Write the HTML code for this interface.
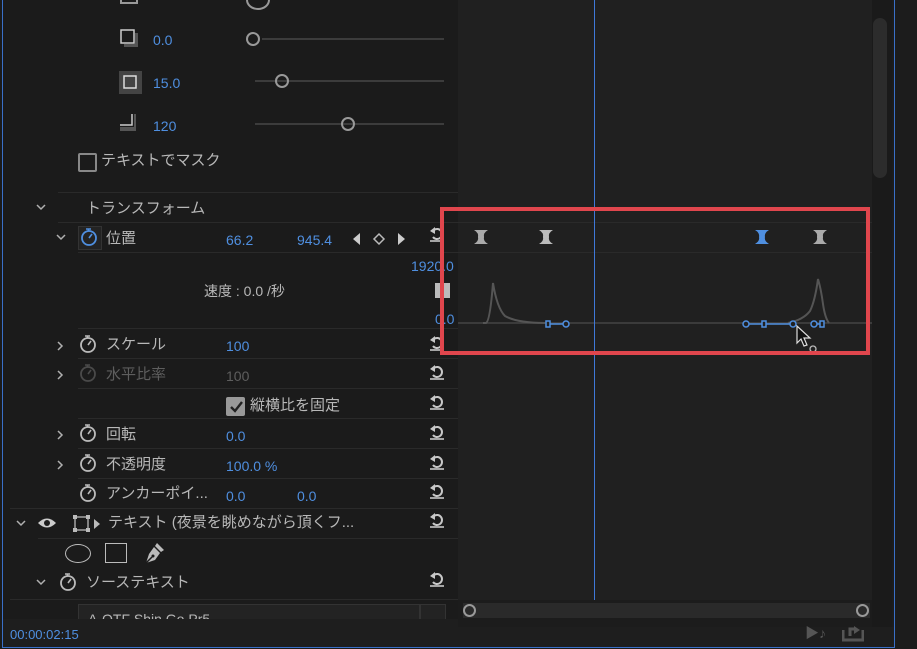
<!DOCTYPE html>
<html><head><meta charset="utf-8"><style>
body{margin:0;width:917px;height:649px;overflow:hidden;background:#1c1c1c;font-family:"Liberation Sans","Noto Sans CJK JP",sans-serif;font-size:14px;color:#b8b8b8;position:relative}
.a{position:absolute}
.b{color:#4f8fe0}
.g{color:#5e5e5e}
.line{position:absolute;height:1px;background:#2a2a2a}
.t{position:absolute;white-space:nowrap;line-height:16px}
</style></head><body>
<svg width="0" height="0" style="position:absolute"><defs>
<g id="sw"><circle cx="9" cy="11" r="7" fill="none" stroke="currentColor" stroke-width="1.8"/><path d="M6 2h5M8.5 2v2M9 11l3-4" stroke="currentColor" stroke-width="1.6" fill="none"/></g>
<g id="rs"><path d="M6 4a5 5 0 1 1 -1 7" fill="none" stroke="#c8c8c8" stroke-width="2"/><path d="M2 5l5-4v7z" fill="#c8c8c8"/><path d="M2 15h14" stroke="#c8c8c8" stroke-width="1.6"/></g>
<g id="ar"><path d="M2 2l4 4-4 4" fill="none" stroke="#b0b0b0" stroke-width="1.5"/></g>
<g id="dn"><path d="M1 2l4 4 4-4" fill="none" stroke="#b0b0b0" stroke-width="1.5"/></g>
<g id="kf"><path d="M0 0h14q-5 3-4 7q-1 4 4 7h-14q5-3 4-7q1-4-4-7z" fill="currentColor"/></g>
</defs></svg>
<div class="a" style="left:0;top:0;width:458px;height:620px;background:#1b1b1b"></div>
<div class="a" style="left:458px;top:0;width:414px;height:600px;background:#202020"></div>
<div class="a" style="left:872px;top:0;width:20px;height:627px;background:#1a1a1a"></div>
<div class="a" style="left:873px;top:18px;width:14px;height:160px;background:#2c2c2c;border-radius:7px"></div>
<div class="a" style="left:2px;top:0;width:1px;height:647px;background:#3a70c8"></div>
<div class="a" style="left:894px;top:0;width:1px;height:648px;background:#3a70c8"></div>
<div class="a" style="left:2px;top:647px;width:893px;height:1px;background:#3a70c8"></div>
<!-- font dropdown (clipped) -->
<div class="a" style="left:78px;top:604px;width:340px;height:23px;background:#232323;border:1px solid #333;overflow:hidden"><div class="t" style="left:9px;top:6px;font-size:14px">A-OTF Shin Go Pr5</div></div>
<div class="a" style="left:420px;top:604px;width:24px;height:23px;background:#232323;border:1px solid #333"></div>
<div class="a" style="left:3px;top:619px;width:455px;height:28px;background:#1e1e1e"></div>
<div class="a" style="left:458px;top:627px;width:436px;height:20px;background:#1e1e1e"></div>
<div class="t b" style="left:10px;top:627px;font-size:13px">00:00:02:15</div>
<div class="t" style="left:805px;top:625px;color:#555;font-size:14px">▶♪</div>
<svg class="a" style="left:842px;top:626px" width="22" height="16"><path d="M1 4v10h20V4M8 10V3h6" fill="none" stroke="#555" stroke-width="3"/><path d="M12 0l6 4-6 4z" fill="#555"/></svg>
<!-- scroll bar -->
<div class="a" style="left:463px;top:603px;width:407px;height:15px;background:#2a2a2a"></div>
<div class="a" style="left:463px;top:604px;width:9px;height:9px;border:2px solid #999;border-radius:50%"></div>
<div class="a" style="left:856px;top:604px;width:9px;height:9px;border:2px solid #999;border-radius:50%"></div>
<!-- top sliders -->
<div class="a" style="left:246px;top:-10px;width:20px;height:16px;border:2px solid #999;border-radius:50%"></div>
<div class="a" style="left:120px;top:-6px;width:14px;height:8px;border:2px solid #999;border-top:none"></div>
<svg class="a" style="left:120px;top:29px" width="22" height="22"><rect x="1" y="1" width="13" height="13" fill="none" stroke="#ccc" stroke-width="1.5"/><path d="M15 4v11H4v3h14V4z" fill="#555"/></svg>
<div class="t b" style="left:153px;top:32px">0.0</div>
<div class="a" style="left:262px;top:38px;width:182px;height:2px;background:#3c3c3c"></div>
<div class="a" style="left:246px;top:32px;width:10px;height:10px;border:2px solid #999;border-radius:50%"></div>
<svg class="a" style="left:119px;top:71px" width="24" height="24"><rect x="0" y="0" width="23" height="23" fill="#444"/><rect x="5" y="5" width="12" height="12" fill="none" stroke="#ddd" stroke-width="1.5"/></svg>
<div class="t b" style="left:153px;top:75px">15.0</div>
<div class="a" style="left:255px;top:80px;width:189px;height:2px;background:#3c3c3c"></div>
<div class="a" style="left:275px;top:74px;width:10px;height:10px;border:2px solid #999;border-radius:50%"></div>
<svg class="a" style="left:119px;top:113px" width="22" height="22"><path d="M13 1v11H1" fill="none" stroke="#ccc" stroke-width="1.5"/><path d="M15 1v13H1v4h16V1z" fill="#555"/></svg>
<div class="t b" style="left:153px;top:118px">120</div>
<div class="a" style="left:255px;top:123px;width:189px;height:2px;background:#3c3c3c"></div>
<div class="a" style="left:341px;top:117px;width:10px;height:10px;border:2px solid #999;border-radius:50%"></div>
<div class="a" style="left:78px;top:153px;width:15px;height:15px;border:2px solid #888;border-radius:2px"></div>
<div class="t" style="left:101px;top:153px;font-size:15px">テキストでマスク</div>
<div class="line" style="left:58px;top:192px;width:400px"></div>
<svg class="a" style="left:36px;top:203px" width="12" height="10"><use href="#dn"/></svg>
<div class="t" style="left:86px;top:201px;font-size:15px">トランスフォーム</div>
<div class="line" style="left:58px;top:222px;width:400px"></div>
<svg class="a" style="left:56px;top:233px" width="12" height="10"><use href="#dn"/></svg>
<div class="a" style="left:78px;top:226px;width:22px;height:22px;background:#232323;border:1px solid #333"></div>
<svg class="a" style="left:80px;top:227px;color:#4f8fe0" width="19" height="20"><use href="#sw"/></svg>
<div class="t" style="left:106px;top:231px;font-size:15px">位置</div>
<div class="t b" style="left:226px;top:232px">66.2</div>
<div class="t b" style="left:297px;top:232px">945.4</div>
<svg class="a" style="left:352px;top:231px" width="60" height="16"><path d="M8 2v12L1 8z" fill="#ccc"/><path d="M27 3l5 5-5 5-5-5z" fill="none" stroke="#bbb" stroke-width="1.5"/><path d="M46 2v12l7-6z" fill="#ccc"/></svg>
<div class="line" style="left:78px;top:252px;width:380px"></div>
<div class="t b" style="left:411px;top:258px">1920.0</div>
<div class="t" style="left:204px;top:283px">速度 : 0.0 /秒</div>
<div class="a" style="left:435px;top:283px;width:15px;height:15px;background:#bbb"></div>
<div class="t b" style="left:435px;top:311px">0.0</div>
<div class="line" style="left:78px;top:328px;width:380px"></div>
<!-- rows -->
<svg class="a" style="left:56px;top:340px" width="10" height="12"><use href="#ar"/></svg>
<svg class="a" style="left:79px;top:334px;color:#bbb" width="19" height="20"><use href="#sw"/></svg>
<div class="t" style="left:106px;top:337px;font-size:15px">スケール</div>
<div class="t b" style="left:226px;top:338px">100</div>
<div class="line" style="left:78px;top:358px;width:380px"></div>
<svg class="a" style="left:56px;top:369px" width="10" height="12"><use href="#ar"/></svg>
<svg class="a" style="left:79px;top:363px;color:#4a4a4a" width="19" height="20"><use href="#sw"/></svg>
<div class="t g" style="left:106px;top:367px;font-size:15px">水平比率</div>
<div class="t g" style="left:226px;top:368px">100</div>
<div class="line" style="left:78px;top:388px;width:380px"></div>
<div class="a" style="left:226px;top:397px;width:19px;height:19px;background:#999;border-radius:2px"></div>
<svg class="a" style="left:229px;top:400px" width="14" height="13"><path d="M2 7l4 4 7-9" fill="none" stroke="#222" stroke-width="2.4"/></svg>
<div class="t" style="left:250px;top:398px;font-size:15px">縦横比を固定</div>
<div class="line" style="left:78px;top:418px;width:380px"></div>
<svg class="a" style="left:56px;top:429px" width="10" height="12"><use href="#ar"/></svg>
<svg class="a" style="left:79px;top:423px;color:#bbb" width="19" height="20"><use href="#sw"/></svg>
<div class="t" style="left:106px;top:427px;font-size:15px">回転</div>
<div class="t b" style="left:226px;top:428px">0.0</div>
<div class="line" style="left:78px;top:448px;width:380px"></div>
<svg class="a" style="left:56px;top:459px" width="10" height="12"><use href="#ar"/></svg>
<svg class="a" style="left:79px;top:453px;color:#bbb" width="19" height="20"><use href="#sw"/></svg>
<div class="t" style="left:106px;top:457px;font-size:15px">不透明度</div>
<div class="t b" style="left:226px;top:458px">100.0 %</div>
<div class="line" style="left:78px;top:478px;width:380px"></div>
<svg class="a" style="left:79px;top:483px;color:#bbb" width="19" height="20"><use href="#sw"/></svg>
<div class="t" style="left:106px;top:486px;font-size:15px">アンカーポイ...</div>
<div class="t b" style="left:226px;top:488px">0.0</div>
<div class="t b" style="left:297px;top:488px">0.0</div>
<div class="line" style="left:10px;top:508px;width:448px"></div>
<svg class="a" style="left:16px;top:519px" width="12" height="10"><use href="#dn"/></svg>
<svg class="a" style="left:37px;top:516px" width="20" height="14"><path d="M1 7q9-9 18 0q-9 9-18 0z" fill="#ccc"/><circle cx="10" cy="7" r="3" fill="#1b1b1b"/></svg>
<svg class="a" style="left:73px;top:515px" width="32" height="18"><rect x="2" y="2" width="13" height="13" fill="none" stroke="#bbb" stroke-width="1.3"/><rect x="0" y="0" width="4" height="4" fill="#bbb"/><rect x="13" y="0" width="4" height="4" fill="#bbb"/><rect x="0" y="13" width="4" height="4" fill="#bbb"/><rect x="13" y="13" width="4" height="4" fill="#bbb"/><path d="M21 4l6 5-6 5z" fill="#bbb"/></svg>
<div class="t" style="left:108px;top:515px;font-size:15px">テキスト (夜景を眺めながら頂くフ...</div>
<div class="line" style="left:38px;top:538px;width:420px"></div>
<div class="a" style="left:65px;top:544px;width:24px;height:17px;border:1.5px solid #bbb;border-radius:50%"></div>
<div class="a" style="left:105px;top:543px;width:20px;height:18px;border:1.5px solid #bbb"></div>
<svg class="a" style="left:143px;top:541px" width="24" height="24"><path d="M14 2l7 7-3 2-6-6zM11 6l6 6-5 7-9 3 3-9z" fill="#bbb"/><path d="M3 22l6-6" stroke="#1b1b1b" stroke-width="1.5"/><circle cx="10" cy="15" r="1.5" fill="#1b1b1b"/></svg>
<svg class="a" style="left:36px;top:578px" width="12" height="10"><use href="#dn"/></svg>
<svg class="a" style="left:59px;top:572px;color:#bbb" width="19" height="20"><use href="#sw"/></svg>
<div class="t" style="left:86px;top:575px;font-size:15px">ソーステキスト</div>
<div class="a" style="left:10px;top:599px;width:448px;height:1px;background:#2a2a2a"></div>
<!-- reset icons -->
<svg class="a" style="left:428px;top:226px" width="18" height="18"><use href="#rs"/></svg>
<svg class="a" style="left:428px;top:335px" width="18" height="18"><use href="#rs"/></svg>
<svg class="a" style="left:428px;top:364px" width="18" height="18"><use href="#rs"/></svg>
<svg class="a" style="left:428px;top:394px" width="18" height="18"><use href="#rs"/></svg>
<svg class="a" style="left:428px;top:424px" width="18" height="18"><use href="#rs"/></svg>
<svg class="a" style="left:428px;top:454px" width="18" height="18"><use href="#rs"/></svg>
<svg class="a" style="left:428px;top:483px" width="18" height="18"><use href="#rs"/></svg>
<svg class="a" style="left:428px;top:512px" width="18" height="18"><use href="#rs"/></svg>
<svg class="a" style="left:428px;top:571px" width="18" height="18"><use href="#rs"/></svg>
<!-- timeline -->
<div class="a" style="left:458px;top:252px;width:414px;height:1px;background:#2a2a2a"></div>
<div class="a" style="left:458px;top:222px;width:414px;height:1px;background:#2a2a2a"></div>
<svg class="a" style="left:458px;top:200px" width="414" height="160">
<g transform="translate(16,30)" style="color:#aaa"><use href="#kf"/></g>
<g transform="translate(81,30)" style="color:#bbb"><use href="#kf"/></g>
<g transform="translate(297,30)" style="color:#4f8fe0"><use href="#kf"/></g>
<g transform="translate(355,30)" style="color:#aaa"><use href="#kf"/></g>
<path d="M0 123H414" stroke="#444" stroke-width="1.5"/>
<path d="M25 123h3q4 -2 7-40q4 25 12 33q12 7 40 7" fill="none" stroke="#555" stroke-width="2"/>
<path d="M330 123q15-3 22-12q5-10 8-32q3 10 5 25q2 14 6 19" fill="none" stroke="#555" stroke-width="2"/>
<g stroke="#4f8fe0" stroke-width="1.5" fill="#202020"><path d="M90 124h18M288 124h48M358 124h6"/><rect x="88" y="121" width="4" height="6"/><circle cx="108" cy="124" r="3"/><circle cx="288" cy="124" r="3"/><rect x="304" y="121" width="4" height="6"/><circle cx="335" cy="124" r="3"/><circle cx="356" cy="124" r="3"/><rect x="362" y="121" width="4" height="6"/></g>
<path d="M339 126v17l4-4 3 7 3-1-3-7h6z" fill="#111" stroke="#ddd" stroke-width="1.2"/>
<circle cx="355" cy="149" r="3" fill="none" stroke="#bbb" stroke-width="1.3"/>
</svg>
<div class="a" style="left:594px;top:0;width:1px;height:600px;background:#3f78d8"></div>
<div class="a" style="left:440px;top:207px;width:422px;height:140px;border:4px solid #e0464d"></div>
</body></html>
